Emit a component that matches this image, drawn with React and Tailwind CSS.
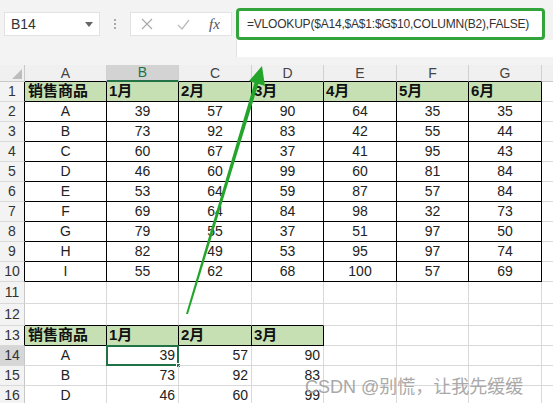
import React from "react";

const widths = ["w-[82px]", "w-[72px]", "w-[73px]", "w-[72px]", "w-[73px]", "w-[72px]", "w-[73px]"];
const letters = ["A", "B", "C", "D", "E", "F", "G"];

const data = [
  ["A", 39, 57, 90, 64, 35, 35],
  ["B", 73, 92, 83, 42, 55, 44],
  ["C", 60, 67, 37, 41, 95, 43],
  ["D", 46, 60, 99, 60, 81, 84],
  ["E", 53, 64, 59, 87, 57, 84],
  ["F", 69, 64, 84, 98, 32, 73],
  ["G", 79, 55, 37, 51, 97, 50],
  ["H", 82, 49, 53, 95, 97, 74],
  ["I", 55, 62, 68, 100, 57, 69],
];

const lookup = [
  ["A", 39, 57, 90],
  ["B", 73, 92, 83],
  ["D", 46, 60, 99],
];

const months = ["1月", "2月", "3月", "4月", "5月", "6月"];

function RowHead({ n, dark, active, h }) {
  return (
    <div
      className={`w-[25px] shrink-0 flex items-center justify-center border-b border-b-[#d9d9d9] text-[14px] text-[#333] border-r ${
        dark ? "border-r-black" : "border-r-[#c8c8c8]"
      } ${active ? "bg-[#d6d6d6]" : "bg-[#f3f3f3]"} ${h}`}
    >
      {n}
    </div>
  );
}

function Cell({ w, children, cls = "" }) {
  return <div className={`${w} shrink-0 flex items-center border-r border-b ${cls}`}>{children}</div>;
}

function Filler({ cls = "border-b-[#d9d9d9]" }) {
  return <div className={`flex-1 border-b ${cls}`}></div>;
}

export default function App() {
  return (
    <div
      className="relative w-[553px] h-[403px] overflow-hidden bg-white"
      style={{ fontFamily: '"Liberation Sans", "Noto Sans CJK SC", sans-serif' }}
    >
      {/* toolbar */}
      <div className="h-[65px] bg-[#f3f3f3] flex items-start">
        <div className="ml-[4px] mt-[12px] w-[96px] h-[24px] bg-white border border-[#e2e2e2] flex items-center justify-between px-[6px]">
          <span className="text-[14px] text-[#333]">B14</span>
          <svg width="8" height="5" viewBox="0 0 8 5">
            <path d="M0 0 L8 0 L4 5 Z" fill="#666" />
          </svg>
        </div>
        <div className="w-[30px] mt-[12px] h-[24px] flex flex-col items-center justify-center gap-[2px]">
          <span className="w-[2px] h-[2px] bg-[#aaa]"></span>
          <span className="w-[2px] h-[2px] bg-[#aaa]"></span>
          <span className="w-[2px] h-[2px] bg-[#aaa]"></span>
        </div>
        <div className="mt-[12px] w-[102px] h-[24px] bg-white border border-[#e2e2e2] flex items-center">
          <svg className="ml-[10px]" width="12" height="12" viewBox="0 0 12 12">
            <path d="M1 1 L11 11 M11 1 L1 11" stroke="#aaa" strokeWidth="1.2" />
          </svg>
          <svg className="ml-[24px]" width="13" height="11" viewBox="0 0 13 11">
            <path d="M1 6 L5 10 L12 1" stroke="#bbb" strokeWidth="1.3" fill="none" />
          </svg>
          <span
            className="ml-[19px] text-[15px] italic text-[#555]"
            style={{ fontFamily: '"Liberation Serif", serif' }}
          >
            fx
          </span>
        </div>
        <div className="ml-[4px] mt-[8px] flex-1 flex flex-col">
          <div className="w-[309px] h-[32px] bg-white border-[3px] border-[#33a33b] rounded-[4px] flex items-center pl-[8px]">
            <span className="text-[12px] tracking-[-0.2px] text-[#333] whitespace-nowrap">
              =VLOOKUP($A14,$A$1:$G$10,COLUMN(B2),FALSE)
            </span>
          </div>
          <div className="h-[17px] bg-white border-l border-[#e2e2e2]"></div>
        </div>
      </div>

      {/* column headers */}
      <div className="flex h-[17px] bg-[#f0f0f0]">
        <div className="w-[25px] shrink-0 border-r border-b border-[#c8c8c8] flex items-end justify-end p-[2px]">
          <svg width="10" height="10" viewBox="0 0 10 10">
            <path d="M10 0 L10 10 L0 10 Z" fill="#bdbdbd" />
          </svg>
        </div>
        {letters.map((l, i) => (
          <div
            key={l}
            className={`${widths[i]} shrink-0 flex items-center justify-center text-[14px] border-r border-r-[#d0d0d0] ${
              i === 1
                ? "bg-[#d3d3d3] text-[#217346] border-b-2 border-b-[#217346]"
                : "text-[#444] border-b border-b-black"
            }`}
          >
            {l}
          </div>
        ))}
        <div className="flex-1 border-b border-[#c8c8c8]"></div>
      </div>

      {/* row 1 */}
      <div className="flex h-[20px]">
        <RowHead n={1} dark h="h-[20px]" />
        {months.map((m, i) => (
          <React.Fragment key={m}>
            {i === 0 && (
              <Cell w={widths[0]} cls="bg-[#c6e0b4] border-black pl-[3px] font-bold text-[15px] text-[#111]">
                销售商品
              </Cell>
            )}
            <Cell w={widths[i + 1]} cls="bg-[#c6e0b4] border-black pl-[2px] font-bold text-[15px] text-[#111]">
              {m}
            </Cell>
          </React.Fragment>
        ))}
        <Filler cls="border-b-[#d9d9d9]" />
      </div>

      {/* rows 2-10 */}
      {data.map((r, ri) => (
        <div key={ri} className="flex h-[20px]">
          <RowHead n={ri + 2} dark h="h-[20px]" />
          {r.map((v, ci) => (
            <Cell key={ci} w={widths[ci]} cls="border-black justify-center text-[14px] text-[#222]">
              {v}
            </Cell>
          ))}
          <Filler />
        </div>
      ))}

      {/* rows 11-12 */}
      {[11, 12].map((n) => (
        <div key={n} className="flex h-[22px]">
          <RowHead n={n} h="h-[22px]" />
          {widths.map((w, ci) => (
            <Cell
              key={ci}
              w={w}
              cls={`border-r-[#d9d9d9] ${n === 12 && ci < 4 ? "border-b-black" : "border-b-[#d9d9d9]"}`}
            />
          ))}
          <Filler />
        </div>
      ))}

      {/* row 13 */}
      <div className="flex h-[20px]">
        <RowHead n={13} dark h="h-[20px]" />
        <Cell w={widths[0]} cls="bg-[#c6e0b4] border-black pl-[3px] font-bold text-[15px] text-[#111]">
          销售商品
        </Cell>
        {months.slice(0, 3).map((m, i) => (
          <Cell key={m} w={widths[i + 1]} cls="bg-[#c6e0b4] border-black pl-[2px] font-bold text-[15px] text-[#111]">
            {m}
          </Cell>
        ))}
        {widths.slice(4).map((w, ci) => (
          <Cell key={ci} w={w} cls="border-[#d9d9d9]" />
        ))}
        <Filler />
      </div>

      {/* rows 14-16 */}
      {lookup.map((r, ri) => (
        <div key={ri} className="flex h-[20px]">
          <RowHead n={ri + 14} active={ri === 0} h="h-[20px]" />
          {widths.map((w, ci) => (
            <Cell
              key={ci}
              w={w}
              cls={`relative border-[#d9d9d9] text-[14px] text-[#222] ${
                ci === 0 ? "justify-center" : "justify-end pr-[3px]"
              }`}
            >
              {r[ci]}
              {ri === 0 && ci === 1 && (
                <>
                  <div className="absolute -left-[1px] -top-[1px] -right-[1px] -bottom-[1px] border-2 border-[#217346]"></div>
                  <div className="absolute -right-[3px] -bottom-[3px] w-[5px] h-[5px] bg-[#217346] border border-white"></div>
                </>
              )}
            </Cell>
          ))}
          <Filler />
        </div>
      ))}

      {/* green arrow */}
      <svg className="absolute left-0 top-0 pointer-events-none" width="553" height="403" viewBox="0 0 553 403">
        <polygon points="186,314 188,314 259,82 255,81" fill="#22a52a" />
        <polygon points="262,66 265,86 249,81" fill="#22a52a" />
      </svg>

      {/* watermark */}
      <div className="absolute left-[305px] top-[374px] text-[18px] text-[#a0a0a0] whitespace-nowrap opacity-90">
        CSDN @别慌，让我先缓缓
      </div>
    </div>
  );
}
